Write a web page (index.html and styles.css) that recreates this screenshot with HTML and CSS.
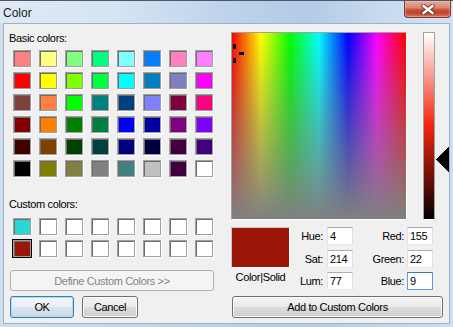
FILE: index.html
```html
<!DOCTYPE html>
<html>
<head>
<meta charset="utf-8">
<title>Color</title>
<link rel="stylesheet" href="styles.css">
</head>
<body>
<div class="window">
  <div class="titlebar">
    <span class="title">Color</span>
    <div class="close">
      <svg width="14" height="11" viewBox="0 0 14 11">
        <path d="M2.5 2 L11.5 9 M11.5 2 L2.5 9" stroke="#3a2522" stroke-width="4.4" stroke-linecap="square" fill="none" opacity=".7"/>
        <path d="M2.5 2 L11.5 9 M11.5 2 L2.5 9" stroke="#fff" stroke-width="2.4" stroke-linecap="square" fill="none"/>
      </svg>
    </div>
  </div>
  <div class="client">
    <div class="leftcol">
      <div class="lbl lbl-basic">Basic colors:</div>
      <div class="swatches basic">
        <div class="sw" style="background:#ff8080"></div><div class="sw" style="background:#ffff80"></div><div class="sw" style="background:#80ff80"></div><div class="sw" style="background:#00ff80"></div><div class="sw" style="background:#80ffff"></div><div class="sw" style="background:#0080ff"></div><div class="sw" style="background:#ff80c0"></div><div class="sw" style="background:#ff80ff"></div>
        <div class="sw" style="background:#ff0000"></div><div class="sw" style="background:#ffff00"></div><div class="sw" style="background:#80ff00"></div><div class="sw" style="background:#00ff40"></div><div class="sw" style="background:#00ffff"></div><div class="sw" style="background:#0080c0"></div><div class="sw" style="background:#8080c0"></div><div class="sw" style="background:#ff00ff"></div>
        <div class="sw" style="background:#804040"></div><div class="sw" style="background:#ff8040"></div><div class="sw" style="background:#00ff00"></div><div class="sw" style="background:#008080"></div><div class="sw" style="background:#004080"></div><div class="sw" style="background:#8080ff"></div><div class="sw" style="background:#800040"></div><div class="sw" style="background:#ff0080"></div>
        <div class="sw" style="background:#800000"></div><div class="sw" style="background:#ff8000"></div><div class="sw" style="background:#008000"></div><div class="sw" style="background:#008040"></div><div class="sw" style="background:#0000ff"></div><div class="sw" style="background:#0000a0"></div><div class="sw" style="background:#800080"></div><div class="sw" style="background:#8000ff"></div>
        <div class="sw" style="background:#400000"></div><div class="sw" style="background:#804000"></div><div class="sw" style="background:#004000"></div><div class="sw" style="background:#004040"></div><div class="sw" style="background:#000080"></div><div class="sw" style="background:#000040"></div><div class="sw" style="background:#400040"></div><div class="sw" style="background:#400080"></div>
        <div class="sw" style="background:#000000"></div><div class="sw" style="background:#808000"></div><div class="sw" style="background:#808040"></div><div class="sw" style="background:#808080"></div><div class="sw" style="background:#408080"></div><div class="sw" style="background:#c0c0c0"></div><div class="sw" style="background:#400040"></div><div class="sw" style="background:#ffffff"></div>
      </div>
      <div class="lbl lbl-custom">Custom colors:</div>
      <div class="swatches custom">
        <div class="sw" style="background:#2cd6d6"></div><div class="sw empty"></div><div class="sw empty"></div><div class="sw empty"></div><div class="sw empty"></div><div class="sw empty"></div><div class="sw empty"></div><div class="sw empty"></div>
        <div class="sw sel" style="background:#9b1609"></div><div class="sw empty"></div><div class="sw empty"></div><div class="sw empty"></div><div class="sw empty"></div><div class="sw empty"></div><div class="sw empty"></div><div class="sw empty"></div>
      </div>
      <button class="btn btn-disabled define">Define Custom Colors &gt;&gt;</button>
      <div class="okrow">
        <button class="btn btn-default ok">OK</button>
        <button class="btn cancel">Cancel</button>
      </div>
    </div>
    <div class="rightcol">
      <div class="pickers">
        <div class="spectrum">
          <i class="ch ch-up"></i><i class="ch ch-down"></i><i class="ch ch-right"></i>
        </div>
        <div class="lumwrap">
          <div class="lum"></div>
          <svg class="arrow" width="13" height="25" viewBox="0 0 13 25" shape-rendering="crispEdges"><polygon points="0,12.5 13,0 13,25" fill="#000"/></svg>
        </div>
      </div>
      <div class="editrow">
        <div class="solidcol">
          <div class="solid"></div>
          <div class="solidlbl">Color|Solid</div>
        </div>
        <div class="fields">
          <span class="flbl">Hue:</span><div class="inp">4</div><span class="flbl flbl2">Red:</span><div class="inp">155</div>
          <span class="flbl">Sat:</span><div class="inp">214</div><span class="flbl flbl2">Green:</span><div class="inp">22</div>
          <span class="flbl">Lum:</span><div class="inp">77</div><span class="flbl flbl2">Blue:</span><div class="inp focus">9</div>
        </div>
      </div>
      <button class="btn add">Add to Custom Colors</button>
    </div>
  </div>
</div>
</body>
</html>
```

FILE: styles.css
```css
body {
  margin: 0;
  width: 453px;
  height: 327px;
  overflow: hidden;
  font-family: "Liberation Sans", Arial, sans-serif;
  font-size: 11px;
  letter-spacing: -0.35px;
  color: #000;
}

.window {
  width: 453px;
  height: 327px;
  display: flex;
  flex-direction: column;
  background: linear-gradient(to right, #cfdff0 0%, #bcd2ea 45%, #b6cde8 70%, #cddef1 100%);
}

.titlebar {
  height: 23px;
  flex: none;
  box-sizing: border-box;
  border-top: 1px solid #4a5868;
  display: flex;
  justify-content: space-between;
  align-items: flex-start;
  background: linear-gradient(to right, #dfe9f5 0%, #d6e4f3 25%, #bdd3eb 50%, #b3cbe7 68%, #c8dbef 85%, #d5e3f3 100%);
}

.title {
  padding: 2px 0 0 3px;
  line-height: 20px;
  font-size: 12px;
  letter-spacing: 0;
  color: #1a1a1a;
}

.close {
  width: 47px;
  height: 17px;
  margin-right: 2px;
  box-sizing: border-box;
  border: 1px solid #7d3a30;
  border-top: 0;
  border-radius: 0 0 4px 4px;
  background: linear-gradient(#e9a99b 0%, #dc8876 40%, #c75038 55%, #bf4330 75%, #d97860 100%);
  box-shadow: inset 0 0 0 1px rgba(255, 215, 205, 0.35);
  display: flex;
  align-items: center;
  justify-content: center;
  padding-top: 1px;
}

.client {
  flex: 1;
  min-height: 0;
  margin: 0 3px 3px;
  border: 1px solid #9db1c9;
  background: #f0f0f0;
  display: flex;
}

.leftcol {
  width: 223px;
  flex: none;
  display: flex;
  flex-direction: column;
  align-items: flex-start;
}

.lbl {
  line-height: 13px;
  height: 13px;
  white-space: nowrap;
}

.lbl-basic { margin: 8px 0 0 5px; }
.lbl-custom { margin: 21px 0 0 5px; }

.swatches {
  display: grid;
  grid-template-columns: repeat(8, 18px);
  grid-auto-rows: 17px;
  column-gap: 8px;
  row-gap: 5px;
  margin-left: 9px;
}

.basic { margin-top: 5px; }
.custom { margin-top: 7px; }

.sw {
  box-sizing: border-box;
  border: 1px solid #a0a0a0;
  box-shadow: inset 1px 1px 0 #6d6d6d, 1px 1px 0 #fff;
}

.sw.empty { background: #fff; }
.sw.sel { outline: 1px solid #000; }

.btn {
  box-sizing: border-box;
  font: inherit;
  letter-spacing: inherit;
  color: #000;
  margin: 0;
  padding: 0;
  border: 1px solid #707070;
  border-radius: 3px;
  background: linear-gradient(#f2f2f2 0%, #ebebeb 50%, #dddddd 51%, #cfcfcf 100%);
  box-shadow: inset 0 0 0 1px #fbfbfb;
  text-align: center;
  white-space: nowrap;
}

.btn-disabled {
  border-color: #adb2b5;
  background: #f4f4f4;
  box-shadow: none;
  color: #838383;
}

.btn-default {
  border-color: #3c7fb1;
  box-shadow: inset 0 0 0 1px #a6dcf6;
  background: linear-gradient(#f4f8fb 0%, #e7eef4 50%, #d8e4ee 51%, #cddae6 100%);
}

.define {
  margin: 13px 0 0 6px;
  width: 204px;
  height: 21px;
}

.okrow {
  display: flex;
  gap: 8px;
  margin: 5px 0 0 6px;
}

.ok { width: 64px; height: 22px; }
.cancel { width: 56px; height: 22px; }

.rightcol {
  flex: 1;
  display: flex;
  flex-direction: column;
  align-items: flex-start;
}

.pickers {
  display: flex;
  margin: 8px 0 0 4px;
}

.spectrum {
  position: relative;
  width: 176px;
  height: 188px;
  box-sizing: border-box;
  border: 1px solid;
  border-color: #a0a0a0 #fff #fff #a0a0a0;
  overflow: hidden;
  background:
    linear-gradient(to bottom, rgba(128, 128, 128, 0), #808080),
    linear-gradient(to right, #f00 0%, #ff0 16.67%, #0f0 33.33%, #0ff 50%, #00f 66.67%, #f0f 83.33%, #f00 100%);
}

.ch {
  position: absolute;
  background: #000;
}

.ch-up { left: 1px; top: 11px; width: 3px; height: 5px; }
.ch-down { left: 1px; top: 25px; width: 3px; height: 5px; }
.ch-right { left: 7px; top: 19px; width: 5px; height: 3px; }

.lumwrap {
  position: relative;
  margin-left: 16px;
  width: 12px;
  height: 188px;
}

.lum {
  width: 12px;
  height: 188px;
  box-sizing: border-box;
  border: 1px solid;
  border-color: #a0a0a0 #a0a0a0 #fff #a0a0a0;
  background: linear-gradient(#fff 0%, rgb(241, 37, 14) 50%, #000 100%);
}

.arrow {
  position: absolute;
  left: 13px;
  top: 115px;
}

.editrow {
  display: flex;
  margin: 7px 0 0 4px;
}

.solidcol {
  width: 59px;
  display: flex;
  flex-direction: column;
  align-items: center;
}

.solid {
  width: 59px;
  height: 41px;
  box-sizing: border-box;
  background: #9b1609;
  border: 1px solid;
  border-color: #c8c8c8 #fff #fff #c8c8c8;
}

.solidlbl {
  margin-top: 3px;
  line-height: 13px;
  white-space: nowrap;
}

.fields {
  display: grid;
  grid-template-columns: 37px 26px 54px 26px;
  grid-template-rows: repeat(3, 18px);
  row-gap: 4.5px;
}

.flbl {
  text-align: right;
  padding-right: 4px;
  line-height: 18px;
  white-space: nowrap;
}

.flbl2 { padding-right: 3px; }

.inp {
  box-sizing: border-box;
  height: 18px;
  background: #fff;
  border: 1px solid;
  border-color: #abadb3 #dbdfe6 #e3e9ef #e2e3ea;
  padding-left: 2px;
  line-height: 16px;
}

.inp.focus {
  border-color: #3d7bad #5b9fe0 #5b9fe0 #5b9fe0;
}

.add {
  margin: 6px 0 0 5px;
  width: 211px;
  height: 22px;
}
```
